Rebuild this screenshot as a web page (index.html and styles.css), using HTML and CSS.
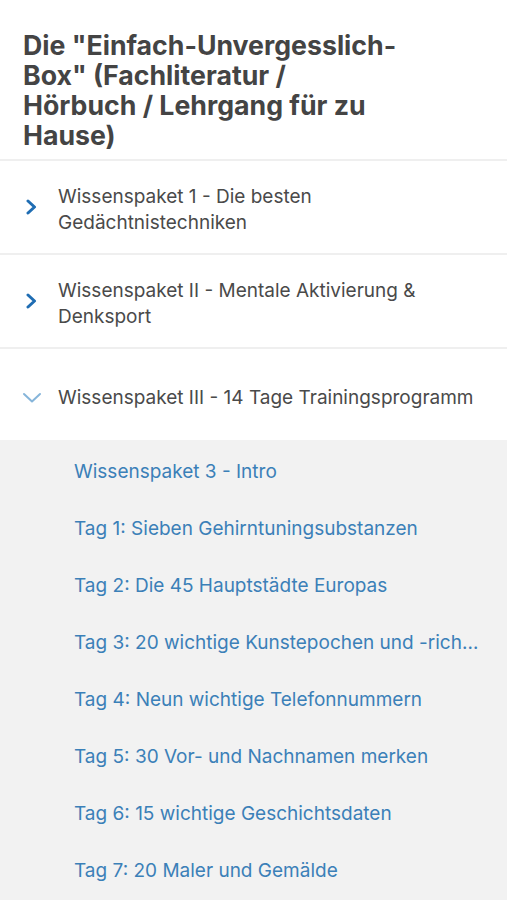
FILE: index.html
```html
<!DOCTYPE html>
<html>
<head>
    <title>Einfach-Unvergesslich-Box</title>
    <link rel="stylesheet" href="styles.css">
</head>
<body>
    <h1 class="course-title">Die "Einfach-Unvergesslich-Box" (Fachliteratur /<br>Hörbuch / Lehrgang für zu Hause)</h1>

    <div class="section">
        <div class="section-head">
            <svg class="chev-right" width="12" height="16" viewBox="0 0 12 16">
                <path d="M3 2 L9.5 8 L3 14" />
            </svg>
            <span class="section-name">Wissenspaket 1 - Die besten Gedächtnistechniken</span>
        </div>
    </div>

    <div class="section">
        <div class="section-head">
            <svg class="chev-right" width="12" height="16" viewBox="0 0 12 16">
                <path d="M3 2 L9.5 8 L3 14" />
            </svg>
            <span class="section-name">Wissenspaket II - Mentale Aktivierung &amp; Denksport</span>
        </div>
    </div>

    <div class="section open">
        <div class="section-head">
            <svg class="chev-down" width="20" height="12" viewBox="0 0 20 12">
                <path d="M2 2 L10 9.5 L18 2" />
            </svg>
            <span class="section-name">Wissenspaket III - 14 Tage Trainingsprogramm</span>
        </div>
        <!-- Lessons of the open section -->
        <ul class="lessons">
            <li>Wissenspaket 3 - Intro</li>
            <li>Tag 1: Sieben Gehirntuningsubstanzen</li>
            <li>Tag 2: Die 45 Hauptstädte Europas</li>
            <li>Tag 3: 20 wichtige Kunstepochen und -richtungen</li>
            <li>Tag 4: Neun wichtige Telefonnummern</li>
            <li>Tag 5: 30 Vor- und Nachnamen merken</li>
            <li>Tag 6: 15 wichtige Geschichtsdaten</li>
            <li>Tag 7: 20 Maler und Gemälde</li>
        </ul>
    </div>
</body>
</html>
```

FILE: styles.css
```css
body {
    margin: 0;
    font-family: Inter, "Noto Sans", sans-serif;
    background-color: white;
    overflow: hidden;
}

.course-title {
    margin: 0;
    padding: 30px 99px 9px 23px;
    font-size: 26.7px;
    line-height: 30px;
    font-weight: 700;
    color: #444;
    border-bottom: 2px solid #efefef;
}

.section {
    border-bottom: 2px solid #efefef;
}

.section.open {
    border-bottom: none;
}

.section-head {
    display: flex;
    align-items: center;
    padding: 23px 24px 17px 0;
}

.section.open .section-head {
    padding-top: 36px;
    padding-bottom: 29px;
}

.section-name {
    font-size: 19px;
    line-height: 26px;
    color: #4a4a4a;
}

/* chevrons sit in a fixed column left of the text */
.chev-right, .chev-down {
    flex: none;
    fill: none;
    stroke-linecap: round;
    stroke-linejoin: round;
}

.chev-right {
    margin: 0 21px 6px 25px;
    stroke: #1f6db3;
    stroke-width: 3;
}

.chev-down {
    margin: 0 16px 0 22px;
    stroke: #86b5da;
    stroke-width: 2;
}

.lessons {
    list-style: none;
    margin: 0;
    padding: 3px 0 20px 0;
    background-color: #f2f2f2;
}

.lessons li {
    padding: 15.5px 24px 15.5px 74px;
    font-size: 19px;
    line-height: 26px;
    color: #3b80b8;
    white-space: nowrap;
    overflow: hidden;
    text-overflow: ellipsis;
}
```
